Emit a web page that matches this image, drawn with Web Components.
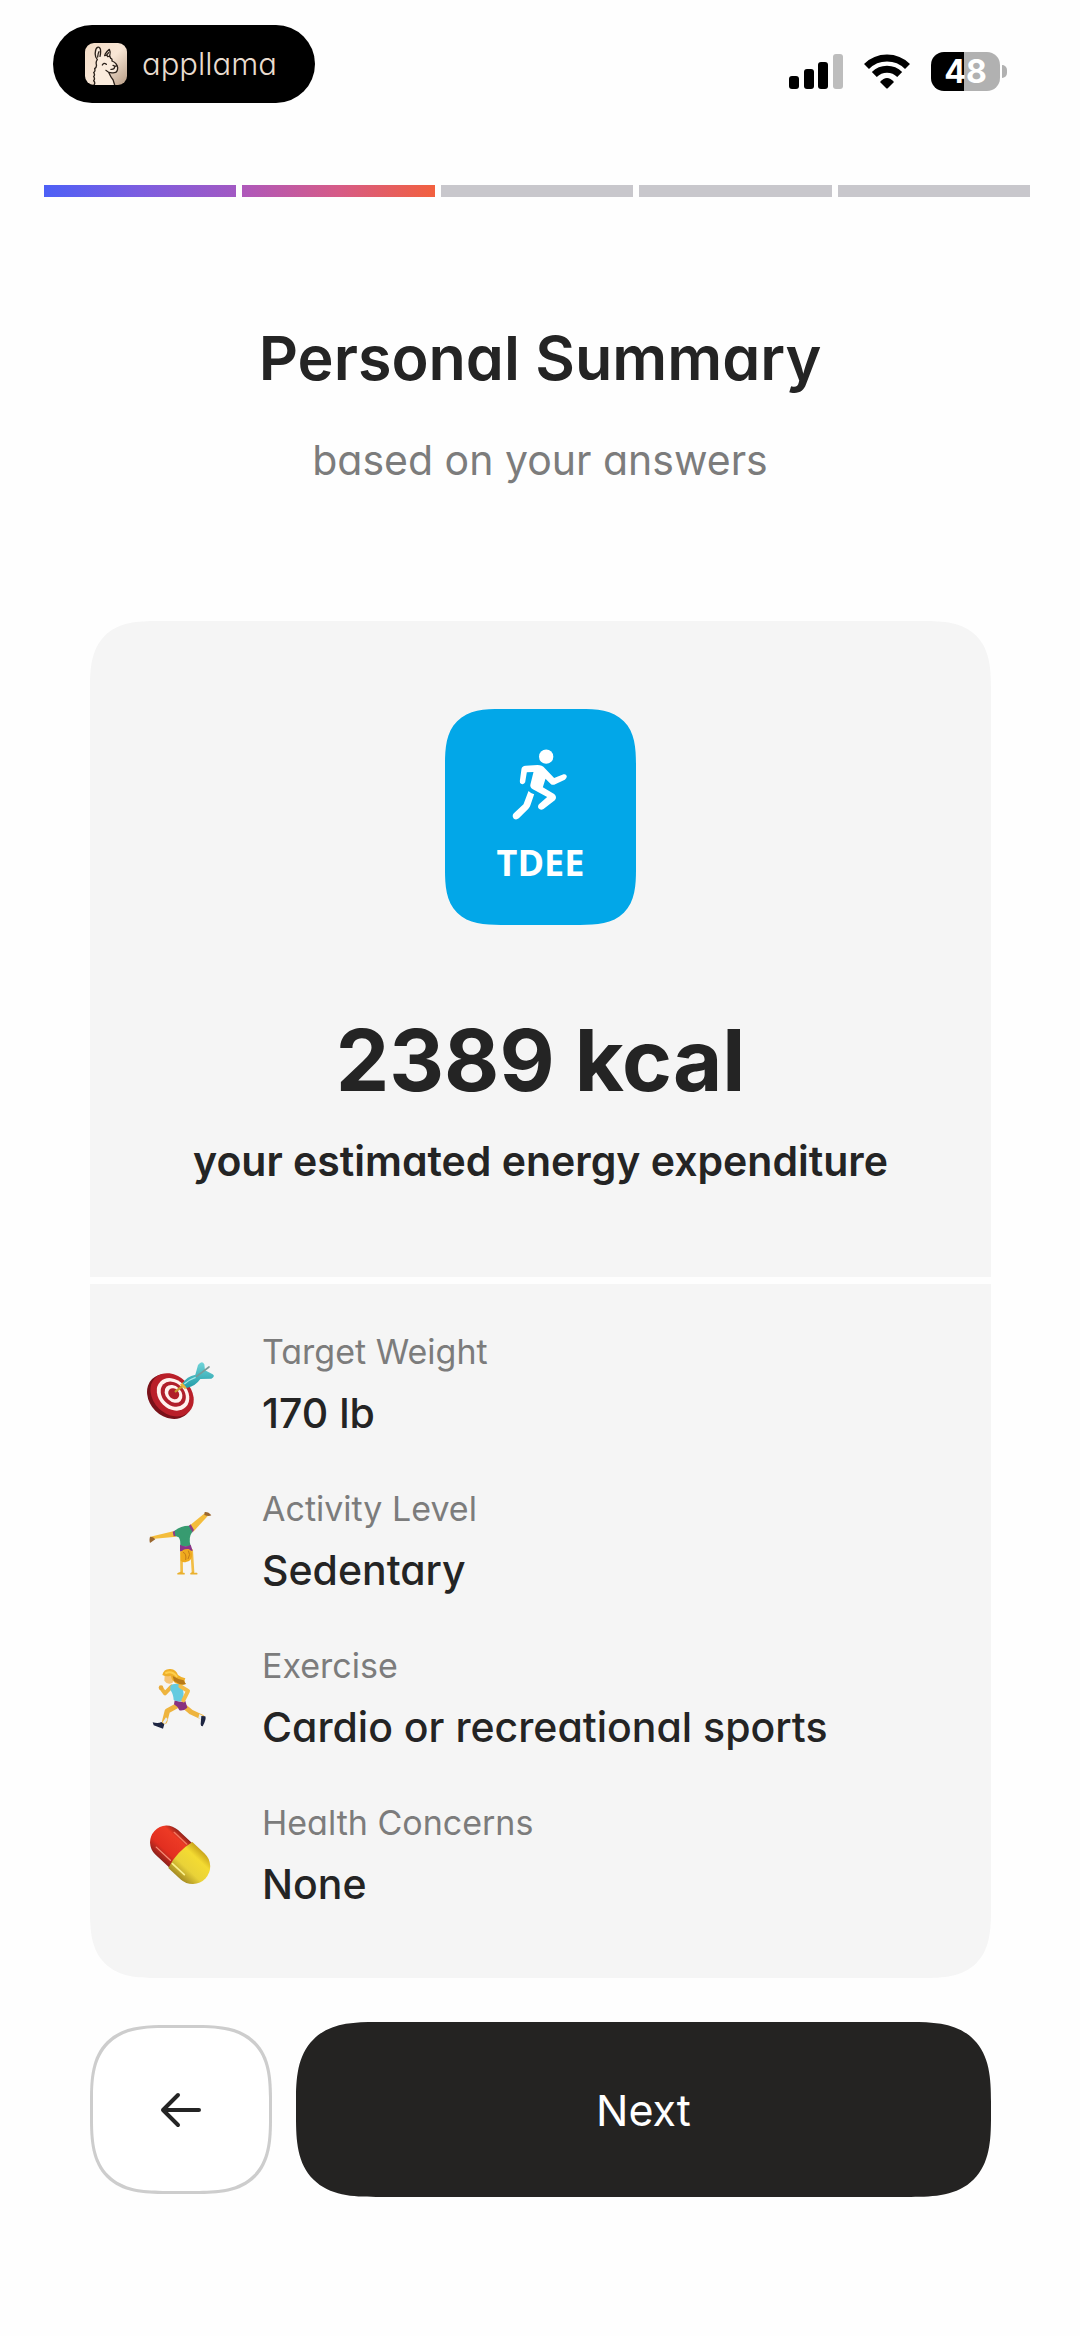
<!DOCTYPE html>
<html lang="en">
<head>
<meta charset="utf-8">
<meta name="viewport" content="width=device-width, initial-scale=1">
<title>Personal Summary</title>
<style>
    body {
        margin: 0;
        background: #fefefe;
        color: #242424;
        font-family: Inter, "Open Sans", sans-serif;
        font-feature-settings: "cv11";
        --ink: #242322;
        --muted: #7c7c7c;
        --panel: #f5f5f5;
    }
</style>
</head>
<body>
<summary-screen></summary-screen>

<script>
class StatusBar extends HTMLElement {
    constructor() {
        super();
        this.attachShadow({ mode: "open" });
    }
    connectedCallback() {
        this.shadowRoot.innerHTML = `
            <style>
                :host {
                    display: flex;
                    justify-content: space-between;
                    align-items: flex-end;
                    padding: 25px 73px 0 53px;
                }
                .brand {
                    display: flex;
                    align-items: center;
                    gap: 15px;
                    box-sizing: border-box;
                    height: 78px;
                    padding: 0 38px 0 32px;
                    border-radius: 39px;
                    background: #000;
                    color: #e9dccf;
                    font-size: 31px;
                    font-weight: 300;
                    line-height: 40px;
                }
                .system {
                    display: flex;
                    align-items: center;
                    gap: 21px;
                    padding-bottom: 12px;
                }
                svg {
                    display: block;
                }
                .battery {
                    display: flex;
                    align-items: center;
                    gap: 2px;
                }
                .level {
                    width: 69px;
                    border-radius: 13px;
                    background: linear-gradient(90deg, #000 48%, #b1b1b1 48%);
                    color: #fff;
                    font-size: 32px;
                    font-weight: 700;
                    line-height: 39px;
                    text-align: center;
                }
                .nub {
                    width: 5px;
                    height: 13px;
                    border-radius: 0 6px 6px 0;
                    background: #b1b1b1;
                }
            </style>
            <div class="brand">
                <svg width="42" height="42" viewBox="0 0 126 126" aria-hidden="true">
                    <defs>
                        <linearGradient id="tile" x1="0" y1="0" x2="1" y2="1">
                            <stop offset="0" stop-color="#f3dcc6"/>
                            <stop offset=".5" stop-color="#f8e6d5"/>
                            <stop offset="1" stop-color="#b79c85"/>
                        </linearGradient>
                    </defs>
                    <rect width="126" height="126" rx="27" fill="url(#tile)"/>
                    <path d="M27 126Q30 118 26 112Q30 106 26 100Q30 94 26 88Q32 82 29 76Q36 72 34 64Q32 56 37 50Q29 40 31 28C32 12 42 8 46 18Q48 28 45 38Q52 34 59 38Q64 24 72 20Q78 28 74 42Q82 46 84 54Q97 60 98 76Q97 88 88 89Q80 92 72 88Q76 100 82 106L89 126Z" fill="#fbecdd"/>
                    <g fill="none" stroke="#2b211a" stroke-width="4" stroke-linecap="round" stroke-linejoin="round">
                        <path d="M27 126Q32 119 26 113Q31 107 26 101Q31 95 26 89Q32 85 29 77Q36 72 34 64Q32 56 37 50Q29 40 31 28C32 12 42 8 46 18Q48 28 45 40"/>
                        <path d="M60 34Q66 24 73 19Q78 28 74 39M38 42Q39 30 42 26M66 35L71 29"/>
                        <path d="M59 38Q66 34 68 41Q76 38 77 46Q82 46 81 54Q96 60 98 74Q98 88 88 89Q72 92 63 82"/>
                        <path d="M52 66Q56 57 64 64M84 67Q90 72 95 68M89 72Q88 80 78 79M72 90Q78 104 84 110L89 126"/>
                    </g>
                </svg>
                <span>appllama</span>
            </div>
            <div class="system">
                <svg width="54" height="35" viewBox="0 0 54 35" role="img" aria-label="Signal">
                    <rect y="22" width="10" height="13" rx="3"/>
                    <rect x="15" y="15" width="10" height="20" rx="3"/>
                    <rect x="29" y="8" width="10" height="27" rx="3"/>
                    <rect x="44" width="10" height="35" rx="3" fill="#bdbdbd"/>
                </svg>
                <svg width="46" height="35" viewBox="0 0 46 35" role="img" aria-label="Wi-Fi">
                    <g fill="none" stroke="#000" stroke-width="7">
                        <path d="M2.500 12.500A29 29 0 0 1 43.500 12.500"/>
                        <path d="M10.300 20.500A18 18 0 0 1 35.700 20.500"/>
                    </g>
                    <path d="M16 28Q23 20 30 28L24 34Q23 35 22 34Z"/>
                </svg>
                <div class="battery">
                    <div class="level">48</div>
                    <div class="nub"></div>
                </div>
            </div>
        `;
    }
}
customElements.define("status-bar", StatusBar);

class StepProgress extends HTMLElement {
    constructor() {
        super();
        this.attachShadow({ mode: "open" });
    }
    connectedCallback() {
        this.shadowRoot.innerHTML = `
            <style>
                :host {
                    display: flex;
                    gap: 6px;
                    padding: 82px 50px 0 44px;
                }
                i {
                    flex: 1;
                    height: 12px;
                    background: #c8c7cc;
                }
                .first {
                    background: linear-gradient(90deg, #4d60f6, #7c5de0 50%, #a259c3);
                }
                .second {
                    background: linear-gradient(90deg, #ae58bb, #d65b87 50%, #f2603f);
                }
            </style>
            <i class="first"></i><i class="second"></i><i></i><i></i><i></i>
        `;
    }
}
customElements.define("step-progress", StepProgress);

class MetricBadge extends HTMLElement {
    constructor() {
        super();
        this.attachShadow({ mode: "open" });
    }
    connectedCallback() {
        this.shadowRoot.innerHTML = `
            <style>
                :host {
                    display: flex;
                    flex-direction: column;
                    align-items: center;
                    gap: 19px;
                    box-sizing: border-box;
                    width: 191px;
                    height: 216px;
                    padding-top: 40px;
                    border-radius: 56px;
                    corner-shape: superellipse(1.5);
                    background: #02a7e8;
                    color: #fff;
                    font-family: "Open Sans", sans-serif;
                    font-size: 36px;
                    font-weight: 700;
                    line-height: 48px;
                }
            </style>
            <svg width="57" height="71" viewBox="276 175 170 213" aria-hidden="true">
                <circle cx="378" cy="198" r="21.500" fill="#fff"/>
                <path d="M304 234Q306 226 316 225L352 223Q366 223 374 233L402 262L430 251Q438 249 440 257Q440 263 434 267L402 282Q396 284 391 279L376 264L368 290L402 310Q412 319 404 329L370 355Q361 360 355 353Q351 345 358 339L381 319L338 296Q328 290 331 280L340 244L320 245L315 275Q312 282 304 280Q298 278 299 271Z" fill="#fff"/>
                <path d="M325 301Q333 309 342 311L331 343Q329 350 324 355L296 383Q288 389 281 384Q274 376 281 368L310 341Z" fill="#fff"/>
            </svg>
            <slot></slot>
        `;
    }
}
customElements.define("metric-badge", MetricBadge);

const FACT_ICONS = {
    target: `
        <svg viewBox="42 84 216 216" aria-hidden="true">
            <defs>
                <linearGradient id="dart" x1="0" y1="0" x2="0" y2="1">
                    <stop offset="0" stop-color="#70d5d9"/>
                    <stop offset="1" stop-color="#239ca8"/>
                </linearGradient>
            </defs>
            <g transform="rotate(45 122 226)">
                <ellipse cx="122" cy="231" rx="74" ry="60" fill="#791119"/>
                <ellipse cx="124" cy="222" rx="72" ry="57" fill="#b91f29"/>
                <ellipse cx="125" cy="219" rx="54" ry="43" fill="#fff2ee"/>
                <ellipse cx="125" cy="218" rx="42" ry="33" fill="#b01f2b"/>
                <ellipse cx="125" cy="217" rx="30" ry="23" fill="#fff2ee"/>
                <ellipse cx="125" cy="216" rx="18" ry="15" fill="#b01f28"/>
            </g>
            <path d="M137 214L158 198" stroke="#c89b32" stroke-width="7" stroke-linecap="round"/>
            <path d="M150 194L165 208L174 198L160 186Z" fill="#e8b338"/>
            <path d="M158 190Q170 169 196 164L204 135Q216 119 223 133L225 151L248 163Q257 169 244 176L211 177Q198 197 171 204Z" fill="url(#dart)"/>
            <path d="M200 169L237 141" stroke="#7a9a98" stroke-width="5" stroke-linecap="round"/>
            <path d="M163 192Q178 178 197 172" fill="none" stroke="#a6e9e9" stroke-width="4"/>
        </svg>`,
    handstand: `
        <svg viewBox="42 45 216 216" aria-hidden="true">
            <g fill="none" stroke-linecap="round" stroke-linejoin="round">
                <path d="M154 181L155 246M185 181L189 246" stroke="#f2bd45" stroke-width="8"/>
                <path d="M155 247L144 251L162 251M189 247L183 251L200 251" stroke="#eab02e" stroke-width="5"/>
            </g>
            <path d="M61 140L130 124L139 140L66 147Z" fill="#f4bd3c"/>
            <path d="M178 107L224 70L234 77L190 125Z" fill="#f4bd3c"/>
            <path d="M60 140L69 142L76 148L60 159Q57 150 60 140ZM224 66Q236 65 244 76Q236 80 223 75Z" fill="#9b672e"/>
            <path d="M128 125L137 121L142 137L131 139ZM175 109L182 103L192 120L186 128Z" fill="#8e3a86"/>
            <path d="M134 122Q153 107 176 107L187 125Q174 143 182 169L150 170Q153 151 146 142L136 138Z" fill="#379b70"/>
            <path d="M150 164Q167 173 182 164L188 182L150 184Z" fill="#8b3488"/>
            <path d="M152 190Q157 175 176 177Q189 183 186 200Q182 213 170 215Q160 220 152 212Z" fill="#efaa1e"/>
            <path d="M159 187Q170 190 167 210M175 182Q183 193 174 207" stroke="#c47b18" stroke-width="3" fill="none"/>
        </svg>`,
    runner: `
        <svg viewBox="42 66 216 216" aria-hidden="true">
            <g fill="none" stroke="#eeb43e" stroke-linecap="round" stroke-linejoin="round">
                <path d="M125 139L105 160L94 145" stroke-width="12"/>
                <path d="M145 195L112 213L104 244" stroke-width="16"/>
                <path d="M160 197L183 216L215 231" stroke-width="15"/>
            </g>
            <path d="M108 232L98 247L105 252L113 237ZM208 222L219 228L214 239L205 234Z" fill="#e7edf0"/>
            <path d="M68 247Q85 251 94 246L103 253L99 266L71 256ZM214 228L226 229Q230 237 218 259Q212 260 212 252Z" fill="#1e2642"/>
            <path d="M134 181Q151 188 166 183L172 203Q160 214 148 211Q143 199 132 193Z" fill="#88327f"/>
            <path d="M121 137Q134 127 154 135Q165 157 158 183Q144 187 131 180Q130 161 121 150Z" fill="#65cbe0"/>
            <path d="M151 139L174 153L160 181" fill="none" stroke="#f3bd48" stroke-width="12" stroke-linecap="round" stroke-linejoin="round"/>
            <circle cx="93" cy="143" r="7" fill="#e9aa38"/>
            <path d="M104 105L103 122Q113 137 128 128L133 104Z" fill="#f6c477"/>
            <path d="M97 105Q101 85 122 87Q138 89 144 105Q153 112 166 115Q161 125 168 132Q154 139 141 131Q127 126 122 107Q110 112 97 105Z" fill="#efb02a"/>
            <path d="M128 108Q142 117 161 121Q165 130 168 132Q151 137 132 123Z" fill="#b87a19"/>
            <path d="M108 99Q126 92 140 109" fill="none" stroke="#ffd04d" stroke-width="6" stroke-linecap="round"/>
        </svg>`,
    pill: `
        <svg viewBox="42 57 216 216" aria-hidden="true">
            <defs>
                <linearGradient id="red" x1="0" y1="0" x2="0" y2="1">
                    <stop offset="0" stop-color="#92231b"/>
                    <stop offset=".2" stop-color="#ed3a25"/>
                    <stop offset=".7" stop-color="#e22f20"/>
                    <stop offset="1" stop-color="#8e211b"/>
                </linearGradient>
                <linearGradient id="yellow" x1="0" y1="0" x2="0" y2="1">
                    <stop offset="0" stop-color="#c9a51b"/>
                    <stop offset=".25" stop-color="#f4db32"/>
                    <stop offset=".65" stop-color="#e9d238"/>
                    <stop offset="1" stop-color="#a58b22"/>
                </linearGradient>
            </defs>
            <g transform="rotate(43 151 165)">
                <path d="M160 115H95A50 50 0 0 0 95 215H160Z" fill="url(#red)"/>
                <path d="M151 112H201A53 53 0 0 1 201 218H151Q136 165 151 112Z" fill="url(#yellow)"/>
                <path d="M82 197H140" stroke="#f38c77" stroke-width="4" stroke-linecap="round"/>
                <path d="M151 200H200" stroke="#fbf08c" stroke-width="5" stroke-linecap="round"/>
                <path d="M91 128H143" stroke="#f47860" stroke-width="4" stroke-linecap="round"/>
            </g>
        </svg>`
};

class FactRow extends HTMLElement {
    constructor() {
        super();
        this.attachShadow({ mode: "open" });
    }
    connectedCallback() {
        this.shadowRoot.innerHTML = `
            <style>
                :host {
                    display: flex;
                    align-items: center;
                    gap: 46px;
                }
                svg {
                    display: block;
                    flex: none;
                    width: 72px;
                    height: 72px;
                }
                .label {
                    color: var(--muted);
                    font-size: 34px;
                    line-height: 58px;
                }
                .value {
                    font-size: 41px;
                    font-weight: 500;
                    line-height: 64px;
                }
            </style>
            ${FACT_ICONS[this.getAttribute("icon")]}
            <div>
                <div class="label">${this.getAttribute("label")}</div>
                <div class="value"><slot></slot></div>
            </div>
        `;
    }
}
customElements.define("fact-row", FactRow);

class SummaryCard extends HTMLElement {
    constructor() {
        super();
        this.attachShadow({ mode: "open" });
    }
    connectedCallback() {
        this.shadowRoot.innerHTML = `
            <style>
                :host {
                    display: flex;
                    flex-direction: column;
                    gap: 7px;
                    overflow: hidden;
                    border-radius: 68px;
                    corner-shape: superellipse(1.5);
                }
                .energy {
                    display: flex;
                    flex-direction: column;
                    align-items: center;
                    padding: 88px 24px 86px;
                    background: var(--panel);
                    text-align: center;
                }
                .amount {
                    margin-top: 86px;
                    font-size: 85px;
                    font-weight: 700;
                    line-height: 100px;
                    font-feature-settings: normal;
                }
                .caption {
                    margin-top: 20px;
                    font-size: 41px;
                    font-weight: 600;
                    line-height: 60px;
                }
                .facts {
                    display: flex;
                    flex-direction: column;
                    gap: 35px;
                    padding: 39px 54px 62px;
                    background: var(--panel);
                }
            </style>
            <section class="energy">
                <metric-badge>TDEE</metric-badge>
                <div class="amount">2389 kcal</div>
                <div class="caption">your estimated energy expenditure</div>
            </section>
            <section class="facts">
                <slot></slot>
            </section>
        `;
    }
}
customElements.define("summary-card", SummaryCard);

class StepActions extends HTMLElement {
    constructor() {
        super();
        this.attachShadow({ mode: "open" });
    }
    connectedCallback() {
        this.shadowRoot.innerHTML = `
            <style>
                :host {
                    display: flex;
                    align-items: center;
                    gap: 24px;
                }
                button {
                    box-sizing: border-box;
                    margin: 0;
                    padding: 0;
                    corner-shape: superellipse(1.5);
                    font: inherit;
                    cursor: pointer;
                }
                .back {
                    display: flex;
                    align-items: center;
                    justify-content: center;
                    width: 182px;
                    height: 169px;
                    border: 3px solid #cdcdcd;
                    border-radius: 76px;
                    background: #fff;
                }
                .next {
                    flex: 1;
                    height: 175px;
                    border: 0;
                    border-radius: 80px;
                    background: var(--ink);
                    color: #fff;
                    font-size: 43px;
                }
            </style>
            <button class="back" type="button" aria-label="Back">
                <svg width="42" height="36" viewBox="0 0 42 36" fill="none" stroke="#242424" stroke-width="4" stroke-linecap="round" stroke-linejoin="round" aria-hidden="true">
                    <path d="M39 18H3M18 3L3 18L18 33"/>
                </svg>
            </button>
            <button class="next" type="button">Next</button>
        `;
    }
}
customElements.define("step-actions", StepActions);

class SummaryScreen extends HTMLElement {
    constructor() {
        super();
        this.attachShadow({ mode: "open" });
    }
    connectedCallback() {
        this.shadowRoot.innerHTML = `
            <style>
                :host {
                    display: block;
                }
                header {
                    padding: 121px 40px 131px;
                    text-align: center;
                }
                h1 {
                    margin: 0;
                    font-size: 61px;
                    font-weight: 600;
                    line-height: 80px;
                }
                p {
                    margin: 32px 0 0;
                    color: var(--muted);
                    font-size: 41px;
                    line-height: 60px;
                }
                main {
                    display: flex;
                    flex-direction: column;
                    gap: 44px;
                    padding: 0 89px 80px 90px;
                }
            </style>
            <status-bar></status-bar>
            <step-progress></step-progress>
            <header>
                <h1>Personal Summary</h1>
                <p>based on your answers</p>
            </header>
            <main>
                <summary-card>
                    <fact-row icon="target" label="Target Weight">170 lb</fact-row>
                    <fact-row icon="handstand" label="Activity Level">Sedentary</fact-row>
                    <fact-row icon="runner" label="Exercise">Cardio or recreational sports</fact-row>
                    <fact-row icon="pill" label="Health Concerns">None</fact-row>
                </summary-card>
                <step-actions></step-actions>
            </main>
        `;
    }
}
customElements.define("summary-screen", SummaryScreen);
</script>
</body>
</html>
